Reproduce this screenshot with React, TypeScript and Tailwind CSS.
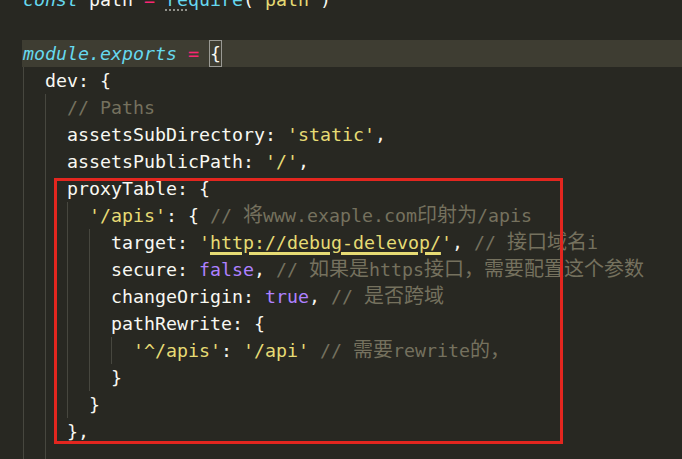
import type { ReactNode } from "react";

// Monokai-ish palette
const txt = "text-[#f8f8f2]";
const cyan = "text-[#66d9ef]";
const pink = "text-[#f92672]";
const str = "text-[#e6db74]";
const num = "text-[#ae81ff]";
const cmt = "text-[#75715e]";

function Row({ children, band = false }: { children?: ReactNode; band?: boolean }) {
  return (
    <div
      className={`h-[27px] leading-[27px] whitespace-pre ${txt} ${band ? "bg-[#3e3d32]" : ""}`}
    >
      {children}
    </div>
  );
}

function Block({ children, root = false }: { children: ReactNode; root?: boolean }) {
  return (
    <div className={`border-l border-[#47473f] pl-[21px] ${root ? "ml-px" : ""}`}>
      {children}
    </div>
  );
}

function Cjk({ children }: { children: ReactNode }) {
  return (
    <span className="text-[20px] leading-none [font-family:'Noto_Sans_CJK_SC',sans-serif]">
      {children}
    </span>
  );
}

export default function App() {
  return (
    <div className="w-[682px] h-[459px] overflow-hidden bg-[#282822] relative">
      <div className="-mt-[14px] pl-[22px] text-[18.27px] [font-family:'DejaVu_Sans_Mono','Noto_Sans_CJK_SC',monospace]">
        <Row>
          <span className="pl-px" />
          <span className={`${cyan} italic`}>const</span> path <span className={pink}>=</span>{" "}
          <span className={cyan}>
            <span className="underline decoration-dotted decoration-[#9a9a94] underline-offset-[4px]">re</span>
            quire
          </span>
          (<span className={str}>'path'</span>)
        </Row>
        <Row />
        <Row band>
          <span className="pl-px" />
          <span className={`${cyan} italic`}>module.exports</span> <span className={pink}>=</span>{" "}
          <span className="inline-block h-[25px] leading-[25px] align-top mt-px outline outline-1 outline-[#9a9a94]">
            {"{"}
          </span>
        </Row>
        <Block root>
          <Row>dev: {"{"}</Row>
          <Block>
            <Row>
              <span className={cmt}>// Paths</span>
            </Row>
            <Row>
              assetsSubDirectory: <span className={str}>'static'</span>,
            </Row>
            <Row>
              assetsPublicPath: <span className={str}>'/'</span>,
            </Row>
            <Row>proxyTable: {"{"}</Row>
            <Block>
              <Row>
                <span className={str}>'/apis'</span>: {"{"}{" "}
                <span className={cmt}>
                  // <Cjk>将</Cjk>www.exaple.com<Cjk>印射为</Cjk>/apis
                </span>
              </Row>
              <Block>
                <Row>
                  target:{" "}
                  <span className={str}>
                    '
                    <span className="underline decoration-[2.5px] decoration-[#e6db74] underline-offset-[3px]">
                      http://debug-delevop/
                    </span>
                    '
                  </span>
                  ,{" "}
                  <span className={cmt}>
                    // <Cjk>接口域名</Cjk>i
                  </span>
                </Row>
                <Row>
                  secure: <span className={num}>false</span>,{" "}
                  <span className={cmt}>
                    // <Cjk>如果是</Cjk>https<Cjk>接口，需要配置这个参数</Cjk>
                  </span>
                </Row>
                <Row>
                  changeOrigin: <span className={num}>true</span>,{" "}
                  <span className={cmt}>
                    // <Cjk>是否跨域</Cjk>
                  </span>
                </Row>
                <Row>pathRewrite: {"{"}</Row>
                <Block>
                  <Row>
                    <span className={str}>'^/apis'</span>: <span className={str}>'/api'</span>{" "}
                    <span className={cmt}>
                      // <Cjk>需要</Cjk>rewrite<Cjk>的，</Cjk>
                    </span>
                  </Row>
                </Block>
                <Row>{"}"}</Row>
              </Block>
              <Row>{"}"}</Row>
            </Block>
            <Row>{"},"}</Row>
            <Row />
          </Block>
        </Block>
      </div>

      {/* annotation box */}
      <div className="absolute left-[54px] top-[178px] w-[509px] h-[266px] border-[3px] border-[#e3261f]" />
    </div>
  );
}
